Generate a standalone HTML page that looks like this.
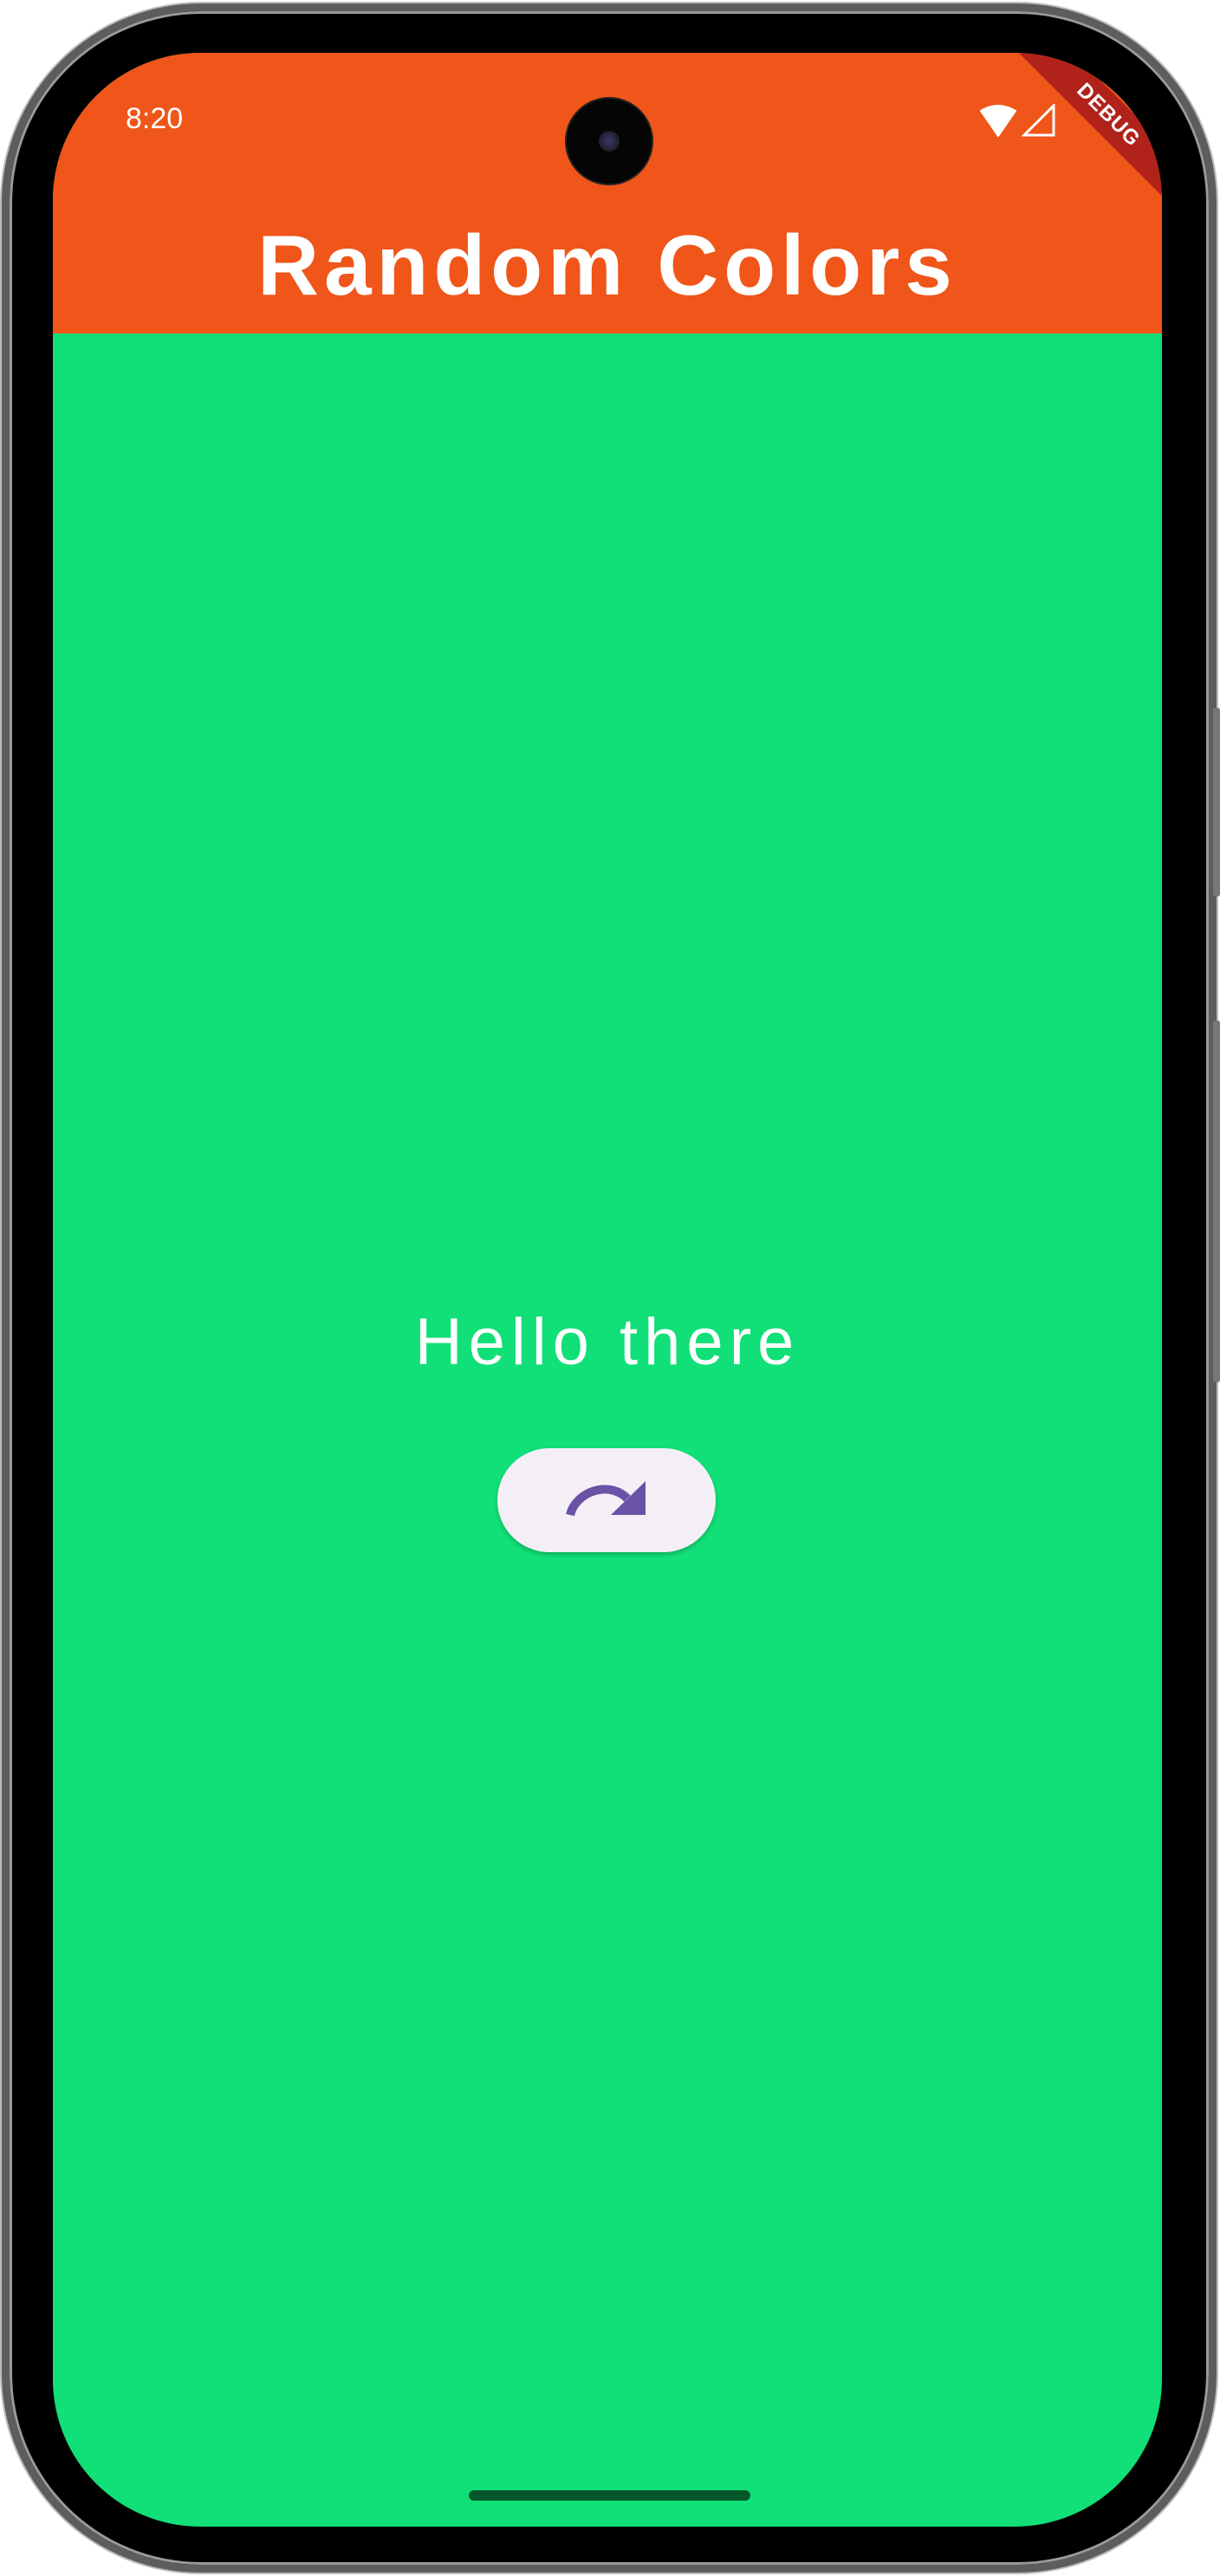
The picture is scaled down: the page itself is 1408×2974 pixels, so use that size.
<!DOCTYPE html>
<html><head><meta charset="utf-8"><style>
*{margin:0;padding:0;box-sizing:border-box}
html,body{width:1408px;height:2974px;background:#fff;overflow:hidden;font-family:"Liberation Sans",sans-serif}
.frame{position:absolute;left:2px;top:4px;width:1402px;height:2966px;border-radius:230px;background:#000;border:9px solid #5d5d5d;box-shadow:inset 0 0 0 3px #9a9a9a,0 0 0 2px #bdbdbd}
.btn{position:absolute;right:0;width:8px;background:#777;border-radius:3px}
.screen{position:absolute;left:61px;top:61px;width:1280px;height:2856px;border-radius:170px;overflow:hidden;background:#11df77}
.bar{position:absolute;left:0;top:0;width:100%;height:324px;background:#f05519}
.time{position:absolute;left:84px;top:57px;color:#fff;font-size:34px}
.title{position:absolute;left:0;width:100%;top:196px;text-align:center;color:#fff;font-weight:bold;font-size:98px;line-height:98px;letter-spacing:6px}
.cam{position:absolute;left:593px;top:53px;width:98px;height:98px;border-radius:50%;background:#050505;box-shadow:0 0 0 2px #222}
.cam i{position:absolute;left:37px;top:37px;width:24px;height:24px;border-radius:50%;background:radial-gradient(circle,#3a3a6a,#111)}
.hello{position:absolute;left:0;width:100%;top:1449px;text-align:center;color:#fff;font-size:76px;line-height:80px;letter-spacing:7px;font-weight:normal}
.fab{position:absolute;left:513px;top:1611px;width:252px;height:120px;border-radius:60px;background:#f4eff6;box-shadow:0 3px 5px rgba(0,0,0,.2)}
.home{position:absolute;left:480px;top:2814px;width:325px;height:12px;border-radius:6px;background:#05572b}
.ribbon{position:absolute;right:-78px;top:50px;width:280px;height:44px;background:#b0221a;transform:rotate(45deg);color:#fff;font-weight:bold;font-size:24px;line-height:44px;text-align:center;letter-spacing:1px}
</style></head><body>
<div class="frame"></div>
<div class="btn" style="top:817px;height:218px"></div>
<div class="btn" style="top:1178px;height:418px"></div>
<div class="screen">
 <div class="bar"></div>
 <div class="time">8:20</div>
 <svg style="position:absolute;left:1069px;top:59px" width="90" height="38" viewBox="0 0 90 38">
  <path d="M2 8 Q22 -4 42 8 L22 37 Z" fill="#fff" stroke="#fff" stroke-width="2" stroke-linejoin="round"/>
  <path d="M52 36 L86 2 L86 36 Z" fill="none" stroke="#fff" stroke-width="3"/>
 </svg>
 <div class="ribbon">DEBUG</div>
 <div class="cam"><i></i></div>
 <div class="title">Random Colors</div>
 <div class="hello">Hello there</div>
 <div class="fab">
  <svg style="position:absolute;left:78px;top:36px" width="96" height="44" viewBox="0 0 96 44">
   <path d="M6 41 C12 15 50 0 72 22" fill="none" stroke="#6a52a6" stroke-width="10"/>
   <path d="M93 2 L93 41 L53 41 Z" fill="#6a52a6"/>
  </svg>
 </div>
 <div class="home"></div>
</div>
</body></html>
